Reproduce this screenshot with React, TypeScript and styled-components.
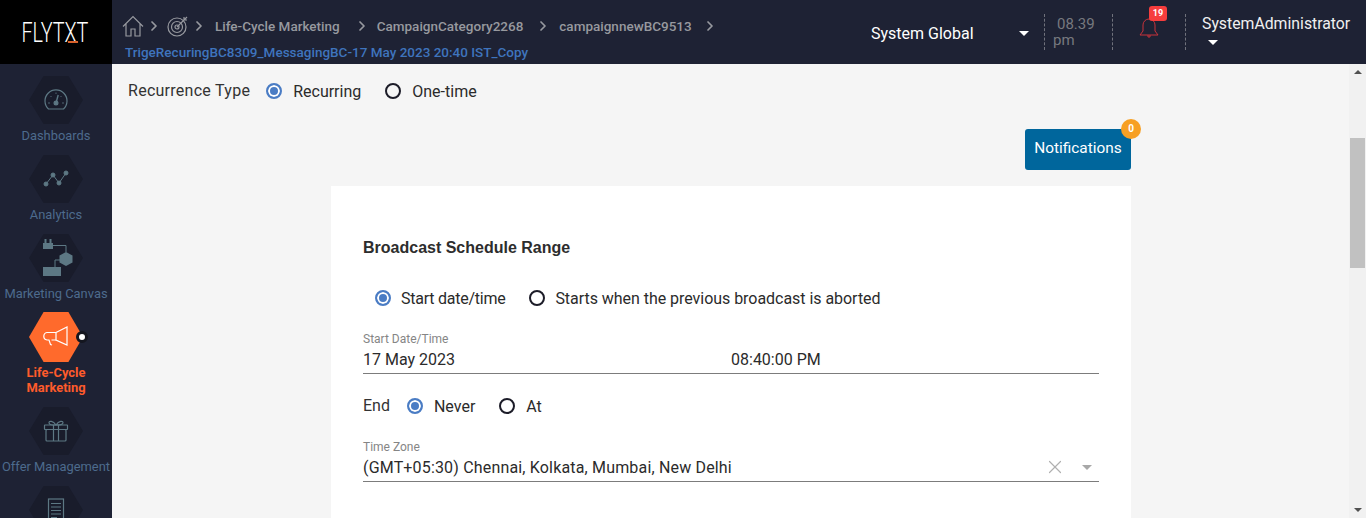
import React from 'react';
import styled, { createGlobalStyle } from 'styled-components';
import { ChevronRight, X } from 'lucide-react';

const GlobalStyle = createGlobalStyle`
  html, body {
    margin: 0;
    height: 100%;
    overflow: hidden;
    background: #f5f5f5;
    font-family: Roboto, "Liberation Sans", sans-serif;
  }
  * { box-sizing: border-box; }
`;

const Page = styled.div`
  height: 100vh;
  display: flex;
  flex-direction: column;
  overflow: hidden;
`;

/* ---------- header ---------- */
const Header = styled.header`
  height: 64px;
  flex: none;
  display: flex;
  background: #1e2234;
`;
const LogoBox = styled.div`
  width: 112px;
  flex: none;
  background: #000;
  display: flex;
  align-items: center;
  justify-content: center;
`;
const Crumbs = styled.div`
  width: 730px;
  flex: none;
  padding: 13px 0 0 10px;
`;
const CrumbRow = styled.div`
  height: 25px;
  display: flex;
  align-items: center;
  color: #97999f;
  font-size: 13.5px;
  font-weight: 500;
`;
const CrumbText = styled.span`
  margin: 0 ${p => p.$gap ?? 13}px 0 ${p => p.$left ?? 9}px;
  white-space: nowrap;
`;
const CrumbIcon = styled.svg`
  flex: none;
  fill: none;
  stroke: #97999f;
  stroke-width: 1.2;
`;
const Arrow = styled(ChevronRight)`
  flex: none;
  color: #97999f;
  margin-left: ${p => p.$left ?? 0}px;
`;
const CampaignName = styled.div`
  margin: 6px 0 0 3px;
  color: #3f74bd;
  font-size: 13.5px;
  font-weight: 500;
  line-height: 16px;
  white-space: nowrap;
`;
const RegionBox = styled.div`
  width: 202px;
  flex: none;
  display: flex;
  align-items: center;
  justify-content: space-between;
  padding: 2px 15px 0 29px;
  color: #fff;
  font-size: 16px;
`;
const Caret = styled.span`
  display: inline-block;
  width: 0;
  height: 0;
  border-left: 5px solid transparent;
  border-right: 5px solid transparent;
  border-top: 5px solid ${p => p.$color ?? '#fff'};
`;
const Divided = styled.div`
  flex: none;
  width: ${p => p.$w}px;
  height: 36px;
  margin-top: 14px;
  border-left: 1px dashed #70727c;
`;
const Clock = styled(Divided)`
  color: #77797f;
  font-size: 15px;
  line-height: 16px;
  padding: 2px 0 0 8px;
  span { display: block; padding-left: 4px; }
`;
const BellBox = styled(Divided)`
  position: relative;
  padding: 3px 0 0 26px;
`;
const RedBadge = styled.span`
  position: absolute;
  left: 36px;
  top: -8px;
  width: 18px;
  height: 15px;
  border-radius: 3px;
  background: #f63d3d;
  color: #fff;
  font-size: 9px;
  font-weight: 700;
  line-height: 15px;
  text-align: center;
`;
const UserBox = styled(Divided)`
  color: #f0f0f0;
  font-size: 15.8px;
  line-height: 20px;
  padding-left: 16px;
  white-space: nowrap;
  ${Caret} { display: block; margin: 6px 0 0 6px; }
`;

/* ---------- sidebar ---------- */
const Body = styled.div`
  flex: 1;
  min-height: 0;
  display: flex;
`;
const Sidebar = styled.nav`
  width: 112px;
  flex: none;
  background: #1e2234;
  padding-top: 12px;
  overflow: hidden;
`;
const NavItem = styled.div`
  height: ${p => p.$h ?? 79}px;
  display: flex;
  flex-direction: column;
  align-items: center;
  position: relative;
`;
const Hexagon = styled.div`
  width: 54px;
  height: ${p => (p.$active ? 50 : 48)}px;
  flex: none;
  background: ${p => (p.$active ? '#ff6a2c' : '#191c2b')};
  clip-path: polygon(27% 0, 73% 0, 100% 50%, 73% 100%, 27% 100%, 0 50%);
  display: flex;
  align-items: center;
  justify-content: center;
`;
const NavLabel = styled.div`
  margin-top: ${p => (p.$active ? 3 : 4)}px;
  color: ${p => (p.$active ? '#ff5b2b' : '#4d6b8d')};
  font-size: 12.9px;
  font-weight: ${p => (p.$active ? 700 : 400)};
  line-height: 15px;
  text-align: center;
  white-space: nowrap;
`;
const ActiveDot = styled.span`
  position: absolute;
  left: 76px;
  top: 19px;
  width: 12px;
  height: 12px;
  border-radius: 50%;
  background: #fff;
  border: 3px solid #14161f;
`;
const NavIcon = styled.svg`
  fill: none;
  stroke: ${p => p.$color ?? '#5d7884'};
  stroke-width: 1.2;
`;

/* ---------- main ---------- */
const Main = styled.main`
  flex: 1;
  min-width: 0;
  background: #f5f5f5;
  padding: 0 218px 0 16px;
  overflow: hidden;
`;
const RecurrenceRow = styled.div`
  height: 54px;
  display: flex;
  align-items: center;
  color: #333;
  font-size: 16px;
`;
const RecurrenceLabel = styled.span`
  margin: -1px 16px 0 0;
  letter-spacing: 0.27px;
`;
const Option = styled.label`
  display: flex;
  align-items: center;
  gap: ${p => p.$gap ?? 11}px;
  margin-right: 24px;
  color: #2b2b2b;
  font-size: 16px;
  letter-spacing: ${p => p.$spacing ?? 0}px;
  white-space: nowrap;
`;
const Radio = styled.span`
  width: 16px;
  height: 16px;
  flex: none;
  border-radius: 50%;
  border: 2px solid ${p => (p.$on ? '#4a7cc4' : '#1c1c28')};
  background: ${p => (p.$on ? '#4a7cc4' : 'transparent')};
  box-shadow: ${p => (p.$on ? 'inset 0 0 0 2px #fff' : 'none')};
`;
const ButtonRow = styled.div`
  display: flex;
  justify-content: flex-end;
  margin-top: 11px;
`;
const NotifyButton = styled.button`
  position: relative;
  width: 106px;
  height: 41px;
  border: 0;
  border-radius: 3px;
  background: #00669c;
  color: #fff;
  font-family: inherit;
  font-size: 15.4px;
  padding: 0 0 3px;
`;
const OrangeBadge = styled.span`
  position: absolute;
  top: -10px;
  right: -10px;
  width: 20px;
  height: 20px;
  border-radius: 50%;
  background: #f7a024;
  color: #fff;
  font-size: 10px;
  font-weight: 700;
  line-height: 20px;
  text-align: center;
`;
const Card = styled.section`
  margin: 16px 0 0 203px;
  height: 400px;
  background: #fff;
  padding: 52px 32px 0;
`;
const CardTitle = styled.h3`
  margin: 0;
  color: #2d2d2d;
  font-family: "Liberation Sans", Arial, sans-serif;
  font-size: 16px;
  font-weight: 700;
  line-height: 20px;
`;
const ScheduleRow = styled.div`
  display: flex;
  align-items: center;
  height: 20px;
  margin: 30px 0 0 12px;
`;
const Field = styled.div`
  margin-top: ${p => p.$top}px;
  height: ${p => p.$h};
  border-bottom: 1px solid #7c7c7c;
`;
const FieldLabel = styled.div`
  color: #858585;
  font-size: 12px;
  line-height: 14px;
`;
const FieldValue = styled.div`
  display: flex;
  align-items: center;
  height: 22px;
  margin-top: 2px;
  color: #2b2b2b;
  font-size: 16px;
  letter-spacing: ${p => p.$spacing ?? 0}px;
  white-space: nowrap;
`;
const TimeText = styled.span`
  margin-left: 276px;
`;
const FieldTools = styled.span`
  margin-left: auto;
  display: flex;
  align-items: center;
  gap: 16px;
  padding-right: 7px;
  color: #b0b0b0;
`;
const EndRow = styled.div`
  display: flex;
  align-items: center;
  height: 20px;
  margin-top: 22px;
`;
const EndLabel = styled.span`
  margin: -2px 17px 0 0;
  color: #333;
  font-size: 16px;
`;

/* ---------- scrollbar ---------- */
const ScrollTrack = styled.div`
  width: 17px;
  flex: none;
  background: #f1f1f1;
  display: flex;
  flex-direction: column;
  align-items: center;
`;
const ScrollUp = styled.span`
  margin-top: 6px;
  border-left: 4px solid transparent;
  border-right: 4px solid transparent;
  border-bottom: 4px solid #505050;
`;
const ScrollDown = styled.span`
  margin-top: auto;
  margin-bottom: 6px;
  border-left: 4px solid transparent;
  border-right: 4px solid transparent;
  border-top: 4px solid #505050;
`;
const ScrollThumb = styled.span`
  width: 15px;
  height: 130px;
  margin-top: 64px;
  background: #c1c1c1;
`;

const DashIcon = () => (
  <NavIcon width="24" height="24" viewBox="0 0 24 24">
    <path d="M4.5 21a11 11 0 1 1 15 0z" />
    <path d="M4 15h2M18 15h2M12 4.5V6M6.5 8l1 1M17.5 8l-1 1" strokeWidth="0.8" />
    <path d="M12 15l2.2-8" strokeWidth="1.4" />
    <circle cx="12" cy="15" r="1.9" fill="#5d7884" />
  </NavIcon>
);
const AnalyticsIcon = () => (
  <NavIcon width="26" height="18" viewBox="0 0 26 18" style={{ strokeWidth: 1 }}>
    <path d="M3 14l7-9 6 8 7-10" />
    <g fill="#5d7884">
      <circle cx="3" cy="14" r="2" />
      <circle cx="10" cy="5" r="2" />
      <circle cx="16" cy="13" r="2" />
      <circle cx="23" cy="3" r="2" />
    </g>
  </NavIcon>
);
const CanvasIcon = () => (
  <NavIcon width="30" height="38" viewBox="0 0 30 38" style={{ marginLeft: 3 }}>
    <path d="M10 6.5h13V13M12 28v-7h5" strokeWidth="1" />
    <rect x="0" y="4" width="10" height="6" fill="#5d7884" stroke="none" />
    <path d="M2.5 0v4M7.5 0v4" strokeWidth="2" />
    <polygon points="23,13 29.5,16.5 29.5,23.5 23,27 16.5,23.5 16.5,16.5" fill="#5d7884" stroke="none" />
    <rect x="0" y="28" width="18" height="9" fill="#5d7884" stroke="none" />
  </NavIcon>
);
const MegaphoneIcon = () => (
  <NavIcon $color="#fff" width="26" height="22" viewBox="0 0 26 22" style={{ strokeWidth: 1.2, marginRight: 3 }}>
    <path d="M14 6.5H5a3.8 3.8 0 0 0 0 7.5h2l1.5 4.5 1.5 .5M9.5 14H14" />
    <path d="M14 6.5L25 1v18l-11-5z" />
  </NavIcon>
);
const GiftIcon = () => (
  <NavIcon width="26" height="22" viewBox="0 0 26 22">
    <rect x="1.5" y="5" width="23" height="4.5" rx="0.5" />
    <rect x="3" y="9.5" width="20" height="11.5" rx="1" />
    <path d="M10.5 5v16M15.5 5v16" />
    <path d="M13 5C10 .5 6 .5 6 2.8S9 5 13 5c4 0 7 0 7-2.2S16 .5 13 5z" />
  </NavIcon>
);
const DocIcon = () => (
  <NavIcon width="18" height="24" viewBox="0 0 18 24">
    <rect x="1.5" y="1" width="15" height="22" />
    <path d="M4 5.5h10M4 9h10M4 12.5h10M4 16h10M4 19.5h6" />
  </NavIcon>
);

const navItems = [
  { label: 'Dashboards', icon: <DashIcon /> },
  { label: 'Analytics', icon: <AnalyticsIcon /> },
  { label: 'Marketing Canvas', icon: <CanvasIcon />, h: 78 },
];

const App = () => (
  <Page>
    <GlobalStyle />
    <Header>
      <LogoBox>
        <svg width="72" height="40" viewBox="0 0 100 40" preserveAspectRatio="none">
          <text x="2" y="30" fontFamily="Roboto, sans-serif" fontSize="28" fontWeight="300" fill="#fff" textLength="93" lengthAdjust="spacingAndGlyphs">FLYTXT</text>
          <rect x="66.6" y="29" width="14" height="2" fill="#d9622b" />
        </svg>
      </LogoBox>
      <Crumbs>
        <CrumbRow>
          <CrumbIcon width="22" height="24" viewBox="0 0 22 24">
            <path d="M1 12.5L11 2.5l10 10M4 10v12h5v-7h4v7h5V10" />
          </CrumbIcon>
          <Arrow size={16} strokeWidth={2.6} $left={2} />
          <CrumbIcon width="22" height="22" viewBox="0 0 22 22" style={{ marginLeft: 5 }}>
            <circle cx="10" cy="12" r="9" />
            <circle cx="10" cy="12" r="5.5" />
            <circle cx="10" cy="12" r="2" />
            <path d="M10 12L20 2M17 2v3h3" />
          </CrumbIcon>
          <Arrow size={16} strokeWidth={2.6} $left={2} />
          <CrumbText $left={8} $gap={14}>Life-Cycle Marketing</CrumbText>
          <Arrow size={16} strokeWidth={2.6} />
          <CrumbText $left={7} $gap={12}>CampaignCategory2268</CrumbText>
          <Arrow size={16} strokeWidth={2.6} />
          <CrumbText $left={8} $gap={10}>campaignnewBC9513</CrumbText>
          <Arrow size={16} strokeWidth={2.6} />
        </CrumbRow>
        <CampaignName>TrigeRecuringBC8309_MessagingBC-17 May 2023 20:40 IST_Copy</CampaignName>
      </Crumbs>
      <RegionBox>
        System Global
        <Caret />
      </RegionBox>
      <Clock $w={68}>
        <span>08.39</span>
        pm
      </Clock>
      <BellBox $w={73}>
        <svg width="20" height="22" viewBox="0 0 20 22" fill="none" stroke="#c8323a" strokeWidth="1">
          <path d="M1 18l3-4V8a6 6 0 0 1 12 0v6l3 4zM9 18v2h2v-2" />
        </svg>
        <RedBadge>19</RedBadge>
      </BellBox>
      <UserBox $w={163}>
        SystemAdministrator
        <Caret />
      </UserBox>
    </Header>
    <Body>
      <Sidebar>
        {navItems.map(item => (
          <NavItem key={item.label} $h={item.h}>
            <Hexagon>{item.icon}</Hexagon>
            <NavLabel>{item.label}</NavLabel>
          </NavItem>
        ))}
        <NavItem $h={95}>
          <Hexagon $active>
            <MegaphoneIcon />
          </Hexagon>
          <ActiveDot />
          <NavLabel $active>
            Life-Cycle
            <br />
            Marketing
          </NavLabel>
        </NavItem>
        <NavItem>
          <Hexagon>
            <GiftIcon />
          </Hexagon>
          <NavLabel>Offer Management</NavLabel>
        </NavItem>
        <NavItem>
          <Hexagon>
            <DocIcon />
          </Hexagon>
        </NavItem>
      </Sidebar>
      <Main>
        <RecurrenceRow>
          <RecurrenceLabel>Recurrence Type</RecurrenceLabel>
          <Option>
            <Radio $on />
            Recurring
          </Option>
          <Option>
            <Radio />
            One-time
          </Option>
        </RecurrenceRow>
        <ButtonRow>
          <NotifyButton>
            Notifications
            <OrangeBadge>0</OrangeBadge>
          </NotifyButton>
        </ButtonRow>
        <Card>
          <CardTitle>Broadcast Schedule Range</CardTitle>
          <ScheduleRow>
            <Option $gap={10} $spacing={-0.25}>
              <Radio $on />
              Start date/time
            </Option>
            <Option $gap={10} $spacing={-0.04}>
              <Radio />
              Starts when the previous broadcast is aborted
            </Option>
          </ScheduleRow>
          <Field $top={24} $h="42px">
            <FieldLabel>Start Date/Time</FieldLabel>
            <FieldValue>
              17 May 2023
              <TimeText>08:40:00 PM</TimeText>
            </FieldValue>
          </Field>
          <EndRow>
            <EndLabel>End</EndLabel>
            <Option>
              <Radio $on />
              Never
            </Option>
            <Option>
              <Radio />
              At
            </Option>
          </EndRow>
          <Field $top={24} $h="42px">
            <FieldLabel>Time Zone</FieldLabel>
            <FieldValue $spacing={0.17}>
              (GMT+05:30) Chennai, Kolkata, Mumbai, New Delhi
              <FieldTools>
                <X size={22} strokeWidth={1.3} />
                <Caret $color="#a8a8a8" />
              </FieldTools>
            </FieldValue>
          </Field>
        </Card>
      </Main>
      <ScrollTrack>
        <ScrollUp />
        <ScrollThumb />
        <ScrollDown />
      </ScrollTrack>
    </Body>
  </Page>
);

export default App;
